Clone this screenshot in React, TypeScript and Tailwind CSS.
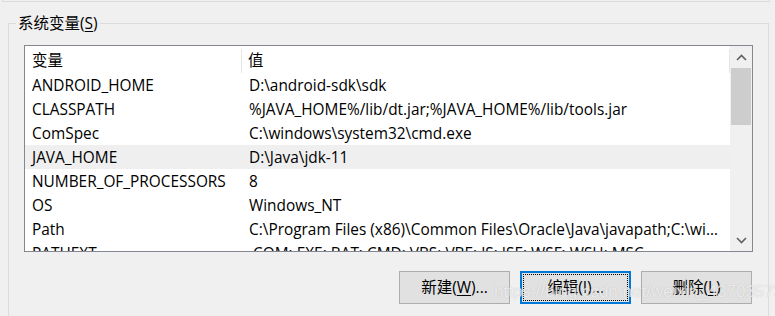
import React from "react";

interface EnvVar {
  name: string;
  value: string;
}

const vars: EnvVar[] = [
  { name: "ANDROID_HOME", value: "D:\\android-sdk\\sdk" },
  { name: "CLASSPATH", value: "%JAVA_HOME%/lib/dt.jar;%JAVA_HOME%/lib/tools.jar" },
  { name: "ComSpec", value: "C:\\windows\\system32\\cmd.exe" },
  { name: "JAVA_HOME", value: "D:\\Java\\jdk-11" },
  { name: "NUMBER_OF_PROCESSORS", value: "8" },
  { name: "OS", value: "Windows_NT" },
  { name: "Path", value: "C:\\Program Files (x86)\\Common Files\\Oracle\\Java\\javapath;C:\\windows\\system32" },
  { name: "PATHEXT", value: ".COM;.EXE;.BAT;.CMD;.VBS;.VBE;.JS;.JSE;.WSF;.WSH;.MSC" },
];

const font = "font-['Open_Sans','Noto_Sans_CJK_SC',sans-serif]";

function Chevron({ dir }: { dir: "up" | "down" }) {
  return (
    <svg width="11" height="7" viewBox="0 0 11 7" className="block">
      <polyline
        points={dir === "up" ? "1,6 5.5,1.5 10,6" : "1,1 5.5,5.5 10,1"}
        fill="none"
        stroke="#606060"
        strokeWidth="1.6"
      />
    </svg>
  );
}

function Btn({ label, hot, rest, focused }: { label: string; hot?: string; rest: string; focused?: boolean }) {
  return (
    <div
      className={`w-[111px] h-[33px] bg-[#e1e1e1] flex items-center justify-center ${
        focused ? "border-2 border-[#0078d7] p-[1px]" : "border border-[#adadad]"
      }`}
    >
      <div
        className={`w-full h-full flex items-center justify-center text-[15.5px] text-black ${
          focused ? "border border-dotted border-black" : ""
        }`}
      >
        {label}
        {hot ? <span className="underline underline-offset-2">{hot}</span> : null}
        {rest}
      </div>
    </div>
  );
}

export default function App() {
  return (
    <div className={`relative w-[775px] h-[316px] overflow-hidden bg-[#f0f0f0] ${font}`}>
      {/* bottom of the group above */}
      <div className="ml-[2px] mr-[5px] h-[2px] border-x border-b border-[#dcdcdc]" />

      {/* 系统变量 group */}
      <div className="relative ml-[8px] w-[761px] h-[300px] mt-[21px] border border-[#dcdcdc]">
        <div className="absolute -top-[12px] left-[7px] px-[2px] bg-[#f0f0f0] text-[15.5px] leading-[22px] text-black">
          系统变量(<span className="underline underline-offset-2">S</span>)
        </div>

        {/* list view */}
        <div className="ml-[15px] mt-[21px] w-[729px] h-[207px] border border-[#828790] bg-white flex overflow-hidden">
          <div className="w-[705px] flex flex-col text-[15.4px] text-black">
            <div className="h-[27px] shrink-0 flex items-center pt-[2px]">
              <div className="w-[217px] h-[24px] pl-[7px] flex items-center border-r border-[#e5e5e5]">变量</div>
              <div className="flex-1 h-[24px] pl-[6px] flex items-center border-r border-[#e5e5e5]">值</div>
            </div>
            {vars.map((v) => (
              <div
                key={v.name}
                className={`h-[24px] shrink-0 flex items-center pt-[2px] leading-[22px] whitespace-nowrap ${
                  v.name === "JAVA_HOME" ? "bg-[#efefef]" : ""
                }`}
              >
                <div className="w-[224px] pl-[7px] overflow-hidden">{v.name}</div>
                <div className="flex-1 pr-[8px] overflow-hidden text-ellipsis">{v.value}</div>
              </div>
            ))}
          </div>

          {/* scrollbar */}
          <div className="w-[22px] bg-[#f0f0f0] flex flex-col items-center">
            <div className="h-[22px] w-full flex items-center justify-center">
              <Chevron dir="up" />
            </div>
            <div className="w-[20px] h-[57px] bg-[#cdcdcd]" />
            <div className="flex-1" />
            <div className="h-[22px] w-full flex items-center justify-center">
              <Chevron dir="down" />
            </div>
          </div>
        </div>

        {/* buttons */}
        <div className="mt-[19px] pr-[16px] flex justify-end gap-[10px]">
          <Btn label="新建(" hot="W" rest=")..." />
          <Btn label="编辑(I)..." rest="" focused />
          <Btn label="删除(" hot="L" rest=")" />
        </div>
      </div>

      {/* watermark */}
      <div className="absolute left-[494px] top-[282px] text-[17px] leading-[20px] font-['Liberation_Sans',sans-serif] text-white/70 [text-shadow:0_0_1px_rgba(140,140,140,0.5)] pointer-events-none">
        https://blog.csdn.net/weixin_43703573
      </div>
    </div>
  );
}
